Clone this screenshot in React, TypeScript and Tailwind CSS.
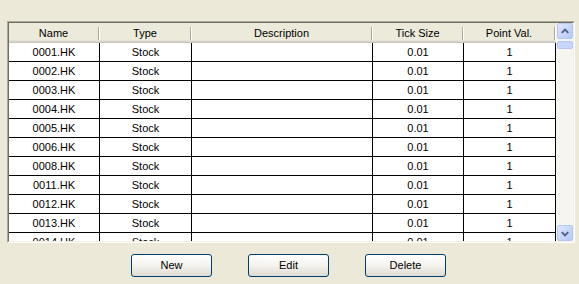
import React from "react";

const rows = [
  "0001.HK",
  "0002.HK",
  "0003.HK",
  "0004.HK",
  "0005.HK",
  "0006.HK",
  "0008.HK",
  "0011.HK",
  "0012.HK",
  "0013.HK",
  "0014.HK",
];

const cols = [
  { label: "Name", w: "w-[91px]" },
  { label: "Type", w: "w-[92px]" },
  { label: "Description", w: "w-[181px]" },
  { label: "Tick Size", w: "w-[91px]" },
  { label: "Point Val.", w: "w-[92px]" },
];

function Chevron({ up }: { up: boolean }) {
  return (
    <svg width="15" height="15" viewBox="0 0 15 15">
      <path
        d={up ? "M4 9 L7.5 5.5 L11 9" : "M4 6 L7.5 9.5 L11 6"}
        fill="none"
        stroke="#4d6185"
        strokeWidth="2"
      />
    </svg>
  );
}

function ScrollBtn({ up }: { up: boolean }) {
  return (
    <div className="w-[16px] h-[16px] rounded-[2px] border border-[#b5c8f3] bg-gradient-to-br from-[#dde7fe] to-[#b4c9f8] flex items-center justify-center">
      <Chevron up={up} />
    </div>
  );
}

function XPButton({ label }: { label: string }) {
  return (
    <div className="w-[81px] h-[23px] rounded-[3px] border border-[#003c74] bg-gradient-to-b from-white via-[#f4f3ee] to-[#dedbd0] flex items-center justify-center text-black">
      {label}
    </div>
  );
}

export default function App() {
  return (
    <div className="w-[579px] h-[284px] bg-[#ece9d8] pt-[21px] pl-[7px] font-['Liberation_Sans',Arial,sans-serif] text-[11px] text-black">
      <div className="w-[568px] h-[222px] border border-t-[#aca899] border-l-[#aca899] border-r-white border-b-white">
        <div className="h-full border border-t-[#716f64] border-l-[#716f64] border-r-[#f1efe2] border-b-[#f1efe2] bg-white flex overflow-hidden">
          <div className="w-[547px] flex flex-col">
            <div className="flex h-[20px] shrink-0 bg-[#ebeadb] shadow-[inset_0_-1px_0_#cbc7b8,inset_0_-2px_0_#d6d3ce,inset_0_-3px_0_#e2e2da]">
              {cols.map((c) => (
                <div key={c.label} className={`${c.w} flex items-center`}>
                  <div className="flex-1 text-center leading-[18px] pb-[1px]">{c.label}</div>
                  <div className="w-[2px] h-[13px] border-l border-l-[#aca899] border-r border-r-white" />
                </div>
              ))}
            </div>
            {rows.map((r) => (
              <div key={r} className="flex h-[19px] shrink-0 border-b border-black">
                <div className="w-[91px] border-r border-black text-center leading-[18px]">{r}</div>
                <div className="w-[92px] border-r border-black text-center leading-[18px]">Stock</div>
                <div className="w-[181px] border-r border-black" />
                <div className="w-[91px] border-r border-black text-center leading-[18px]">0.01</div>
                <div className="w-[92px] border-r border-black text-center leading-[18px]">1</div>
              </div>
            ))}
          </div>
          <div className="w-[17px] h-full bg-[#f6f5ef] flex flex-col items-center pt-0">
            <ScrollBtn up />
            <div className="mt-[2px] w-[16px] h-[8px] rounded-[2px] border border-[#b5c8f3] bg-[#c6d6fc]" />
            <div className="flex-1" />
            <ScrollBtn up={false} />
          </div>
        </div>
      </div>
      <div className="mt-[11px] pl-[124px] flex gap-[36px]">
        <XPButton label="New" />
        <XPButton label="Edit" />
        <XPButton label="Delete" />
      </div>
    </div>
  );
}
